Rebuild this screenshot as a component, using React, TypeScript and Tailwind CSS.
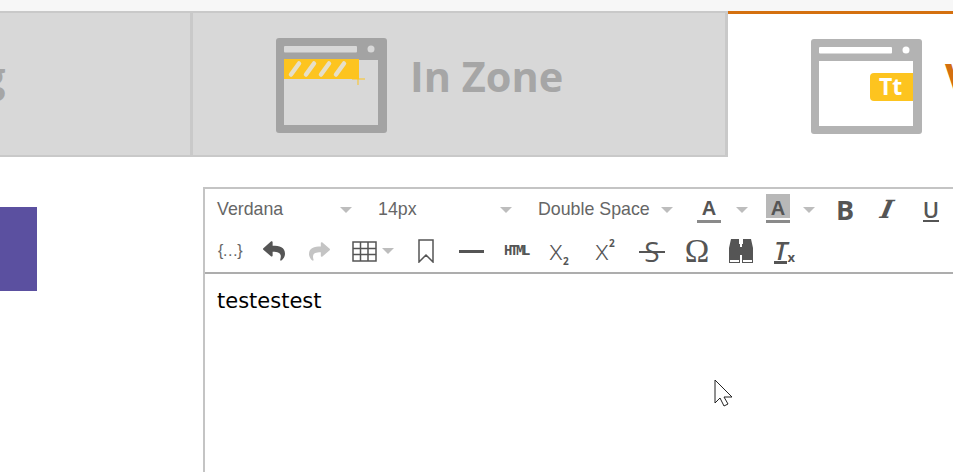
function WindowIcon({ frame, pane, children }: { frame: string; pane: string; children?: React.ReactNode }) {
  return (
    <svg width="111" height="95" viewBox="0 0 111 95" className="mt-[2px] shrink-0">
      <rect x="0" y="0" width="111" height="95" rx="3" fill={frame} />
      <rect x="8" y="22" width="94" height="65" fill={pane} />
      <rect x="8" y="8" width="73" height="6.5" rx="1" fill={pane} />
      <circle cx="95" cy="11" r="3.5" fill={pane} />
      {children}
    </svg>
  );
}

function Caret({ className = "" }: { className?: string }) {
  return (
    <svg width="12" height="6" viewBox="0 0 12 6" className={`shrink-0 ${className}`}>
      <path d="M0 0h12L6 6z" fill="#bdbdbd" />
    </svg>
  );
}

function FontSelect({ label, width }: { label: string; width: string }) {
  return (
    <div className={`flex items-center justify-between ${width}`}>
      <span>{label}</span>
      <Caret />
    </div>
  );
}

function Tabs() {
  return (
    <div className="flex h-[146px] overflow-hidden font-['Open_Sans',sans-serif] text-[41.5px] font-bold leading-none">
      <div className="flex w-[193px] shrink-0 items-center overflow-hidden border-y-2 border-r-[3px] border-[#c9c9c9] bg-[#d8d8d8] text-[#a6a6a6]">
        <span className="-mt-[14px] -ml-[18px]">g</span>
      </div>
      <div className="flex w-[535px] shrink-0 items-center gap-[23px] border-y-2 border-r-[3px] border-[#c9c9c9] bg-[#d8d8d8] pl-[83px] text-[#a6a6a6]">
        <WindowIcon frame="#a3a3a3" pane="#d8d8d8">
          <rect x="8" y="21" width="75" height="20" fill="#fdc41f" />
          <path d="M15 36.5l8-11M30 36.5l8-11M45 36.5l8-11M60 36.5l8-11" stroke="#e6dfc8" strokeWidth="4.5" strokeLinecap="round" />
          <path d="M82 35v12M76 41h13" stroke="#fdc41f" strokeWidth="1" />
        </WindowIcon>
        <span className="-mt-[14px]">In Zone</span>
      </div>
      <div className="flex min-w-0 flex-1 items-center gap-[23px] border-t-[3px] border-[#d4700f] bg-white pl-[83px] text-[#d4700f]">
        <WindowIcon frame="#b3b3b3" pane="#ffffff">
          <path d="M59 38a4 4 0 0 1 4-4h39v28H63a4 4 0 0 1-4-4z" fill="#fdc41f" />
          <text x="68" y="56" fill="#ffffff" fontSize="23" fontWeight="700" fontFamily="'Open Sans', sans-serif">
            Tt
          </text>
        </WindowIcon>
        <span className="-mt-[14px]">Visual</span>
      </div>
    </div>
  );
}

function FormatRow() {
  return (
    <div className="flex h-[41px] items-center pl-3 font-['Liberation_Sans',sans-serif] text-[17.8px] text-[#666666]">
      <FontSelect label="Verdana" width="w-[135px]" />
      <div className="ml-[26px]">
        <FontSelect label="14px" width="w-[134px]" />
      </div>
      <div className="ml-[26px]">
        <FontSelect label="Double Space" width="w-[135px]" />
      </div>

      {/* text colour */}
      <div className="mb-[2px] ml-[24px] flex h-[29px] w-[24px] flex-col items-center justify-end border-b-[3px] border-[#8a8a8a] text-[20px] font-bold leading-[24px] text-[#555555]">
        A
      </div>
      <Caret className="ml-[15px]" />

      {/* background colour */}
      <div className="mb-[2px] ml-[18px] flex h-[29px] w-[24px] items-start justify-center border-b-[3px] border-[#8a8a8a] bg-[linear-gradient(#b8b8b8_24px,#ffffff_24px)] pt-[2px] text-[20px] font-bold leading-[24px] text-[#555555]">
        A
      </div>
      <Caret className="ml-[13px]" />

      <span className="ml-[21px] font-['Open_Sans',sans-serif] text-[27px] font-bold leading-none text-[#555555]">B</span>
      <span className="ml-[27px] -skew-x-12 font-['DejaVu_Serif',serif] text-[25px] font-bold italic leading-none text-[#555555]">I</span>
      <span className="ml-[30px] border-b-2 border-[#555555] font-['Open_Sans',sans-serif] text-[22px] font-semibold leading-[22px] text-[#555555]">U</span>
    </div>
  );
}

function InsertRow() {
  return (
    <div className="flex h-[42px] items-center pl-[13px] text-[#555555]">
      <span className="w-[24px] whitespace-nowrap font-['Liberation_Sans',sans-serif] text-[16px] tracking-[-1px] text-[#666666]">{"{…}"}</span>
      <svg width="22" height="22" viewBox="0 0 512 512" fill="currentColor" className="ml-[21px] shrink-0">
        <path d="M8.3 189.8l176-152C199.7 24.5 224 35.3 224 56v80.1c160.6 1.8 288 34 288 186.3 0 61.5-39.6 122.4-83.4 154.2-13.7 9.9-33.1-2.5-28.1-18.6 45.4-145.2-21.5-183.8-176.5-186V360c0 20.7-24.3 31.5-39.7 18.2l-176-152c-11.1-9.6-11.1-26.8 0-36.4z" />
      </svg>
      <svg width="21" height="21" viewBox="0 0 512 512" fill="#c4c4c4" className="ml-[24px] shrink-0">
        <path d="M503.7 189.8l-176-152C312.3 24.5 288 35.3 288 56v80.1C127.4 137.9 0 170.1 0 322.4c0 61.5 39.6 122.4 83.4 154.2 13.7 9.9 33.1-2.5 28.1-18.6C66.1 312.8 133 274.2 288 272v88c0 20.7 24.3 31.5 39.7 18.2l176-152c11.1-9.6 11.1-26.8 0-36.4z" />
      </svg>
      <svg width="25" height="21" viewBox="0 0 25 21" fill="none" stroke="#555555" strokeWidth="1.5" className="ml-[22px] shrink-0">
        <rect x="1" y="1" width="23" height="19" />
        <path d="M1 7.5h23M1 13.5h23M8.5 1v19M16 1v19" />
      </svg>
      <Caret className="ml-[5px]" />
      <svg width="16" height="24" viewBox="0 0 16 24" fill="none" stroke="#555555" strokeWidth="1.5" className="ml-[24px] shrink-0">
        <path d="M1 1h14v22l-7-7-7 7z" />
      </svg>
      <div className="ml-[25px] h-[3px] w-[25px] shrink-0 bg-[#555555]" />
      <span className="ml-[20px] w-[25px] whitespace-nowrap font-['Liberation_Mono',monospace] text-[14px] font-bold tracking-[-2.4px]">HTML</span>
      <span className="-mt-[5px] ml-[20px] flex w-[22px] items-end font-['Open_Sans',sans-serif] text-[28px] font-light leading-none">
        x<span className="-mb-[3px] text-[10px] font-bold">2</span>
      </span>
      <span className="-mt-[5px] ml-[24px] flex w-[22px] items-start font-['Open_Sans',sans-serif] text-[28px] font-light leading-none">
        x<span className="text-[10px] font-bold leading-[16px]">2</span>
      </span>
      <span className="relative ml-[22px] w-[26px] text-center font-['Open_Sans',sans-serif] text-[28px] leading-none">
        S<span className="absolute left-0 right-0 top-[14px] h-[2px] bg-[#555555]" />
      </span>
      <span className="ml-[19px] w-[26px] text-center font-['Liberation_Serif',serif] text-[33px] leading-none">Ω</span>
      <svg width="24" height="24" viewBox="0 0 24 24" className="ml-[19px] shrink-0">
        <path d="M2 0h8v5h1v19H0V9zM22 0h-8v5h-1v19h11V9zM11 8h2v8h-2z" fill="#555555" />
        <path d="M1 21h9v2H1zM14 21h9v2h-9z" fill="#ffffff" />
      </svg>
      <span className="ml-[21px] flex w-[24px] items-end font-['Open_Sans',sans-serif] leading-none">
        <span className="border-b-[3px] border-[#555555] text-[26px] font-semibold italic leading-[22px]">T</span>
        <span className="text-[13px] font-bold">x</span>
      </span>
    </div>
  );
}

export default function App() {
  return (
    <div className="h-[472px] w-[953px] overflow-hidden bg-white">
      <div className="h-[11px] bg-[#f7f7f7]" />
      <Tabs />

      <div className="mt-[30px] flex">
        <div className="w-[203px] shrink-0 pt-[20px]">
          <div className="h-[84px] w-[37px] bg-[#5b50a0]" />
        </div>

        {/* Editor */}
        <div className="relative h-[285px] min-w-0 flex-1 border-l-2 border-t-2 border-[#c4c4c4]">
          <div className="border-b-2 border-[#adadad]">
            <FormatRow />
            <InsertRow />
          </div>
          <p className="px-3 pt-[13px] font-['DejaVu_Sans',sans-serif] text-[21px] leading-[28px] text-black">testestest</p>

          <svg width="20" height="28" viewBox="0 0 20 28" className="absolute left-[509px] top-[190px]">
            <path d="M1 1v23l5-5 4 8 4-2-4-7h8z" fill="#ffffff" stroke="#222222" strokeWidth="1" />
          </svg>
        </div>
      </div>
    </div>
  );
}
